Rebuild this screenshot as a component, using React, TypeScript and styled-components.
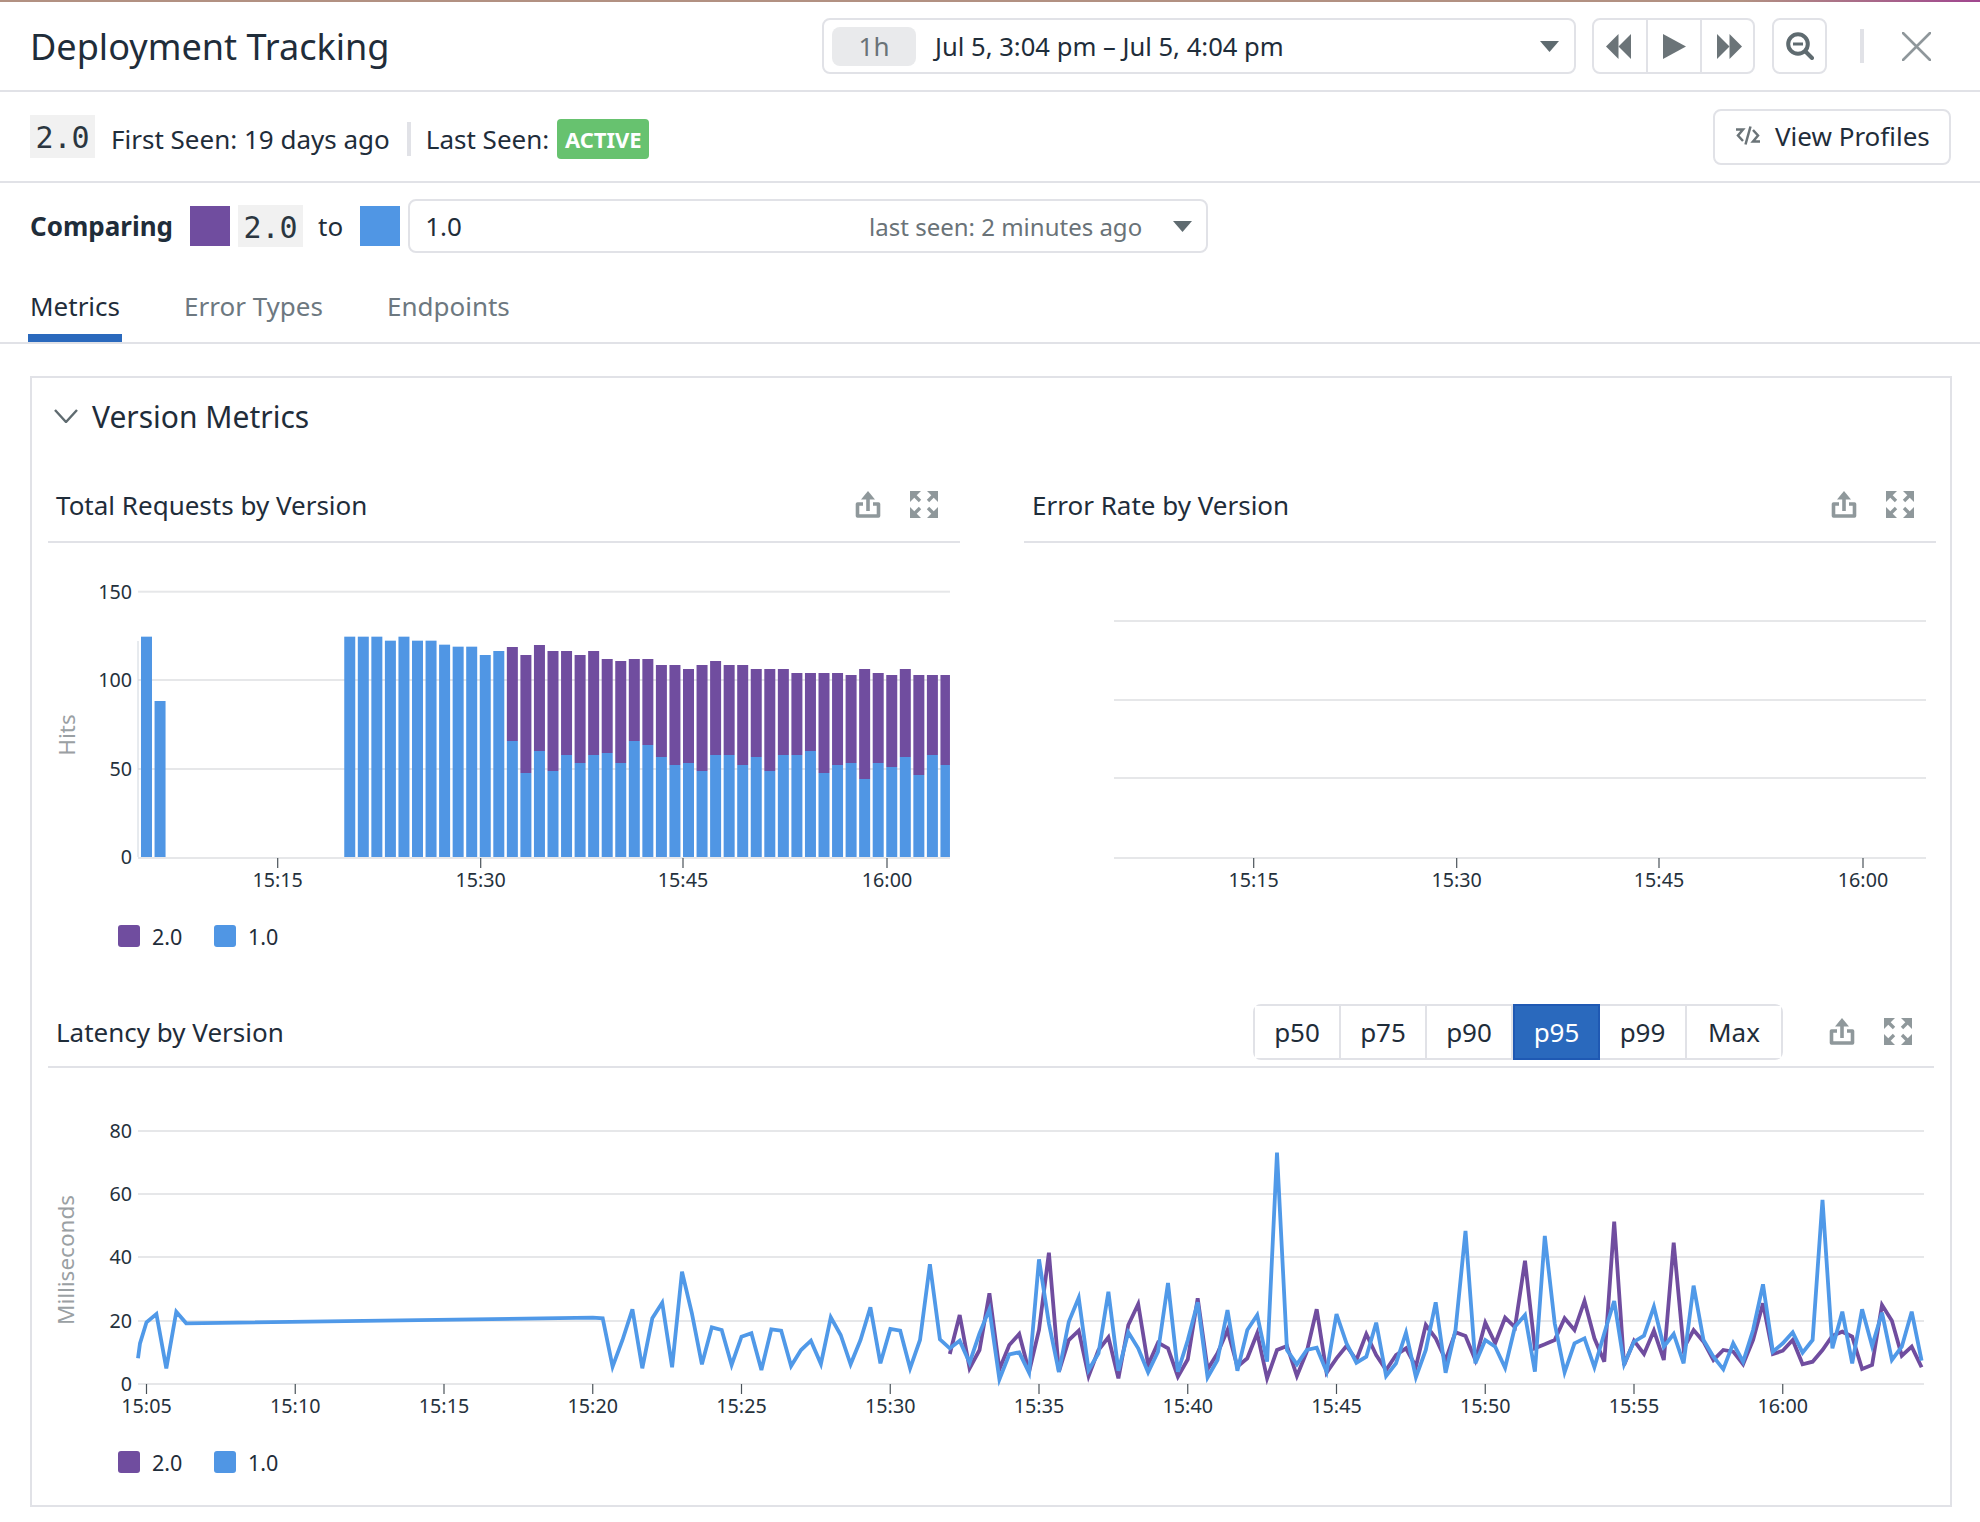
import React from 'react';
import styled, { createGlobalStyle } from 'styled-components';

const BLUE = '#5096e4';
const PURPLE = '#704d9f';
const LINE = '#e1e2e7';
const GRID = '#e6e7e9';

const GlobalStyle = createGlobalStyle`
  html, body {
    margin: 0;
    background: #fff;
    color: #1f2d3a;
    font-family: "Noto Sans", sans-serif;
  }
  * { box-sizing: border-box; }
`;

const Page = styled.div`
  width: 1980px;
  height: 1522px;
  overflow: hidden;
`;
const TopStripe = styled.div`
  height: 2px;
  background: linear-gradient(90deg, #b29182 0, #b29182 88%, #a0468f 100%);
`;
const Header = styled.header`
  height: 90px;
  padding: 0 49px 0 30px;
  display: flex;
  align-items: center;
  justify-content: space-between;
  border-bottom: 2px solid ${LINE};
`;
const Title = styled.h1`
  margin: 0;
  font-size: 36.1px;
  font-weight: 400;
  color: #1f2d3a;
`;
const Controls = styled.div`
  display: flex;
  align-items: center;
`;
const TimePicker = styled.div`
  width: 754px;
  height: 56px;
  padding: 0 15px 0 8px;
  display: flex;
  align-items: center;
  border: 2px solid ${LINE};
  border-radius: 8px;
`;
const RangeChip = styled.span`
  width: 84px;
  height: 39px;
  display: flex;
  align-items: center;
  justify-content: center;
  border-radius: 8px;
  background: #e9eaec;
  color: #6a7378;
  font-size: 26px;
`;
const RangeText = styled.span`
  flex: 1;
  margin-left: 19px;
  font-size: 25.6px;
`;
const NavGroup = styled.div`
  width: 163px;
  height: 56px;
  margin-left: 16px;
  display: grid;
  grid-template-columns: 54px 54px 1fr;
  border: 2px solid ${LINE};
  border-radius: 8px;
`;
const NavCell = styled.span<{ $last?: boolean; $first?: boolean }>`
  display: flex;
  align-items: center;
  justify-content: center;
  padding-right: ${p => (p.$first ? 3 : 0)}px;
  padding-left: ${p => (p.$last ? 3 : 0)}px;
  border-right: ${p => (p.$last ? 'none' : `2px solid ${LINE}`)};
`;
const ZoomButton = styled.span`
  width: 55px;
  height: 56px;
  margin-left: 17px;
  display: flex;
  align-items: center;
  justify-content: center;
  border: 2px solid ${LINE};
  border-radius: 8px;
`;
const ToolbarRule = styled.span`
  width: 4px;
  height: 34px;
  margin-left: 33px;
  background: ${LINE};
`;
const CloseIcon = styled.svg`
  width: 29px;
  height: 29px;
  margin-left: 38px;
`;
const InfoRow = styled.section`
  height: 91px;
  padding: 0 29px 0 30px;
  display: flex;
  align-items: center;
  border-bottom: 2px solid ${LINE};
`;
const VersionCode = styled.code`
  width: 65px;
  height: 43px;
  padding-top: 2px;
  display: flex;
  align-items: center;
  justify-content: center;
  background: #f1f1f1;
  font-family: "DejaVu Sans Mono", monospace;
  font-size: 30px;
  color: #2b3640;
`;
const InfoText = styled.span`
  font-size: 26px;
  margin: 4px 0 0 16px;
`;
const Pipe = styled.span`
  width: 4px;
  height: 34px;
  margin: 5px -1px 0 17px;
  background: ${LINE};
`;
const ActiveBadge = styled.span`
  height: 40px;
  width: 92px;
  margin: 5px 0 0 8px;
  display: flex;
  align-items: center;
  justify-content: center;
  border-radius: 4px;
  background: #67c26f;
  color: #fff;
  font-size: 22px;
  font-weight: 700;
`;
const ViewProfiles = styled.button`
  height: 56px;
  width: 238px;
  margin-left: auto;
  padding: 0 0 2px 20px;
  display: flex;
  align-items: center;
  gap: 14px;
  background: #fff;
  border: 2px solid ${LINE};
  border-radius: 8px;
  font: inherit;
  font-size: 26px;
  color: #1f2d3a;
`;
const CompareRow = styled.section`
  height: 89px;
  padding: 16px 30px 0;
  display: flex;
  align-items: flex-start;
`;
const CompareLabel = styled.strong`
  height: 54px;
  display: flex;
  align-items: center;
  font-size: 26px;
  font-weight: 700;
`;
const Swatch = styled.span<{ $color: string; $left: number }>`
  width: 40px;
  height: 40px;
  margin: 7px 0 0 ${p => p.$left}px;
  background: ${p => p.$color};
`;
const CompareCode = styled(VersionCode)`
  height: 42px;
  margin: 6px 0 0 8px;
`;
const ToWord = styled.span`
  height: 54px;
  margin-left: 15px;
  display: flex;
  align-items: center;
  font-size: 26px;
`;
const VersionSelect = styled.div`
  width: 800px;
  height: 54px;
  margin-left: 8px;
  padding: 0 14px 0 15px;
  display: flex;
  align-items: center;
  border: 2px solid ${LINE};
  border-radius: 8px;
  font-size: 26px;
`;
const SelectValue = styled.span`
  flex: 1;
`;
const SelectHint = styled.span`
  margin-right: 31px;
  font-size: 24px;
  color: #6a7378;
`;
const Tabs = styled.nav`
  height: 72px;
  padding-left: 28px;
  display: flex;
  gap: 60px;
  border-bottom: 2px solid ${LINE};
`;
const Tab = styled.span<{ $active?: boolean }>`
  height: 70px;
  padding: 6px 2px 0;
  display: flex;
  align-items: center;
  font-size: 26px;
  color: ${p => (p.$active ? '#1f2d3a' : '#6d7880')};
  border-bottom: 8px solid ${p => (p.$active ? '#2a69bd' : 'transparent')};
`;
const Card = styled.section`
  width: 1922px;
  height: 1131px;
  margin: 32px 0 0 30px;
  padding: 0 13px 0 16px;
  border: 2px solid ${LINE};
`;
const CardHeader = styled.div`
  height: 76px;
  margin-bottom: 14px;
  padding-left: 6px;
  display: flex;
  align-items: center;
  gap: 14px;
  font-size: 30px;
`;
const WidgetRow = styled.div`
  display: grid;
  grid-template-columns: 912px 912px;
  gap: 64px;
  margin-bottom: 35px;
`;
const Widget = styled.div``;
const LatencyWidget = styled.div`
  width: 1886px;
`;
const WidgetHeader = styled.div<{ $height: number }>`
  height: ${p => p.$height}px;
  padding: 0 22px 0 8px;
  display: flex;
  align-items: center;
  border-bottom: 2px solid ${LINE};
`;
const WidgetTitle = styled.span`
  flex: 1;
  font-size: 26px;
`;
const WidgetIcons = styled.span`
  display: flex;
  align-items: center;
  gap: 29px;
`;
const PercentileGroup = styled.div`
  height: 56px;
  margin-right: 46px;
  display: flex;
  border: 2px solid ${LINE};
  border-radius: 8px;
`;
const Percentile = styled.span<{ $active?: boolean; $width: number }>`
  width: ${p => p.$width}px;
  display: flex;
  align-items: center;
  justify-content: center;
  font-size: 26px;
  margin: ${p => (p.$active ? '-2px 0' : '0')};
  color: ${p => (p.$active ? '#fff' : '#1f2d3a')};
  background: ${p => (p.$active ? '#2a69bd' : '#fff')};
  border: ${p => (p.$active ? '2px solid #1f59b3' : 'none')};
  &:not(:last-child) {
    border-right: ${p => (p.$active ? '' : `2px solid ${LINE}`)};
  }
`;
const ChartSvg = styled.svg`
  display: block;
`;
const AxisText = styled.text`
  font-family: "Noto Sans", sans-serif;
  font-size: 19.7px;
  fill: #25313c;
`;
const AxisTitle = styled.text`
  font-family: "Noto Sans", sans-serif;
  font-size: 22.5px;
  fill: #9aa0a3;
`;
const Legend = styled.div`
  height: 52px;
  padding-left: 70px;
  display: flex;
  align-items: center;
`;
const LegendItem = styled.span`
  width: 96px;
  display: flex;
  align-items: center;
  gap: 12px;
  font-size: 21.5px;
`;
const LegendDot = styled.span<{ $color: string }>`
  width: 22px;
  height: 22px;
  border-radius: 3px;
  background: ${p => p.$color};
`;

const Caret = ({ width = 19 }: { width?: number }) => (
  <svg width={width} height="11" viewBox="0 0 19 11">
    <polygon points="0,0 19,0 9.5,11" fill="#5f6b70" />
  </svg>
);

const ShareIcon = () => (
  <svg width="26" height="27" viewBox="0 0 26 27" fill="none" stroke="#8f989b" strokeWidth="3.6">
    <path d="M8 13H2.5V25H23.5V13H18" strokeLinejoin="round" />
    <path d="M13 6V20" />
    <polygon points="13,0 20,8.5 6,8.5" fill="#8f989b" stroke="none" />
  </svg>
);

const ExpandIcon = () => (
  <svg width="28" height="27" viewBox="0 0 28 27" fill="#8f989b">
    <polygon points="0,0 11,0 0,11" />
    <path d="M3 3L10 10" stroke="#8f989b" strokeWidth="3.4" />
    <polygon points="28,0 17,0 28,11" />
    <path d="M25 3L18 10" stroke="#8f989b" strokeWidth="3.4" />
    <polygon points="0,27 11,27 0,16" />
    <path d="M3 24L10 17" stroke="#8f989b" strokeWidth="3.4" />
    <polygon points="28,27 17,27 28,16" />
    <path d="M25 24L18 17" stroke="#8f989b" strokeWidth="3.4" />
  </svg>
);

const WidgetActions = () => (
  <WidgetIcons>
    <ShareIcon />
    <ExpandIcon />
  </WidgetIcons>
);

// bar tops are in thirds of a pixel, below a line 67px under the widget header
const singleBars: Record<number, number> = {
  0: 80, 1: 273, 15: 80, 16: 80, 17: 80, 18: 92, 19: 80, 20: 92, 21: 92, 22: 104, 23: 110, 24: 110, 25: 135, 26: 123,
};
const stackedBars: [number, number][] = [
  [111, 393], [135, 489], [105, 423], [123, 483], [123, 435], [135, 459], [123, 435], [147, 429], [153, 459],
  [147, 393], [147, 405], [165, 441], [165, 465], [177, 459], [165, 483], [153, 435], [165, 435], [165, 465],
  [177, 441], [177, 483], [177, 435], [189, 435], [189, 423], [189, 489], [189, 465], [195, 459], [177, 507],
  [189, 459], [195, 471], [177, 441], [195, 495], [195, 435], [195, 465],
];

const BAR_BASE = 314;
const barY = (z: number) => 67 + z / 3;
const barX = (i: number) => 93 + i * 13.55;
const barW = (i: number) => (i === 59 ? 9.5 : 11);

const hourTicks = [
  { x: 229.7, label: '15:15' },
  { x: 432.7, label: '15:30' },
  { x: 635, label: '15:45' },
  { x: 839, label: '16:00' },
];

const HourAxis = () => (
  <>
    <rect x="90" y={BAR_BASE} width="812" height="2" fill={GRID} />
    {hourTicks.map(t => (
      <g key={t.label}>
        <line x1={t.x} x2={t.x} y1={BAR_BASE + 1} y2={BAR_BASE + 11} stroke="#4a5359" strokeWidth="1.2" />
        <AxisText x={t.x} y={BAR_BASE + 30} textAnchor="middle">{t.label}</AxisText>
      </g>
    ))}
  </>
);

const RequestsChart = () => (
  <ChartSvg width="912" height="367">
    {[
      { y: 48.7, label: '150' },
      { y: 137, label: '100' },
      { y: 226, label: '50' },
    ].map(g => (
      <g key={g.label}>
        <rect x="90" y={g.y - 1} width="812" height="2" fill={GRID} />
        <AxisText x="84" y={g.y + 7} textAnchor="end">{g.label}</AxisText>
      </g>
    ))}
    <AxisText x="84" y={BAR_BASE + 6.5} textAnchor="end">0</AxisText>
    <line x1="90" x2="90" y1="98" y2={BAR_BASE} stroke="#cfd6de" strokeWidth="1" />
    <AxisTitle transform={`translate(27 192) rotate(-90)`} textAnchor="middle">Hits</AxisTitle>
    {Object.entries(singleBars).map(([k, z]) => {
      const i = Number(k);
      return <rect key={k} x={barX(i)} y={barY(z)} width={barW(i)} height={BAR_BASE - barY(z)} fill={BLUE} />;
    })}
    {stackedBars.map(([top, mid], n) => {
      const i = n + 27;
      return (
        <g key={i}>
          <rect x={barX(i)} y={barY(top)} width={barW(i)} height={barY(mid) - barY(top)} fill={PURPLE} />
          <rect x={barX(i)} y={barY(mid)} width={barW(i)} height={BAR_BASE - barY(mid)} fill={BLUE} />
        </g>
      );
    })}
    <HourAxis />
  </ChartSvg>
);

const ErrorChart = () => (
  <ChartSvg width="912" height="367">
    {[78, 157, 235].map(y => (
      <rect key={y} x="90" y={y - 1} width="812" height="2" fill={GRID} />
    ))}
    <HourAxis />
  </ChartSvg>
);

// latency samples every 20s, in thirds of a pixel below the line 62px under the header
const blueFrom52 = [
  518, 712, 425, 550, 703, 592, 600, 705, 620, 610, 720, 598, 602, 708, 660, 632, 702, 562, 615, 703, 630, 532, 700,
  597, 602, 715, 630, 403, 628, 655, 632, 698, 610, 538, 748, 673, 667, 728, 388, 580, 726, 575, 503, 720, 670, 485,
  722, 607, 655, 727, 665, 459, 725, 630, 517, 742, 690, 540, 722, 600, 555, 695, 68, 660, 703, 660, 653, 725, 552,
  640, 698, 680, 578, 738, 700, 608, 742, 660, 517, 728, 600, 303, 700, 630, 650, 713, 590, 555, 725, 318, 580, 727,
  640, 625, 712, 610, 513, 703, 635, 617, 530, 650, 612, 700, 467, 630, 680, 718, 640, 695, 600, 463, 665, 640, 607,
  668, 630, 210, 655, 545, 700, 538, 648, 548, 690, 650, 545, 692,
];
const purpleFrom81 = [
  672, 555, 715, 660, 490, 718, 645, 612, 725, 600, 368, 725, 630, 602, 738, 660, 622, 745, 585, 522, 705, 638, 655,
  740, 688, 505, 718, 670, 600, 710, 685, 610, 745, 660, 648, 738, 665, 538, 728, 685, 648, 690, 612, 675, 720, 675,
  655, 710, 585, 625, 690, 607, 618, 690, 578, 640, 563, 592, 392, 655, 643, 630, 565, 600, 513, 625, 695, 275, 705,
  632, 672, 602, 690, 338, 655, 600, 635, 690, 660, 665, 703, 630, 520, 672, 662, 630, 703, 695, 660, 617, 605, 620,
  717, 705, 525, 572, 677, 650, 712,
];

const sampleX = (i: number) => 98.5 + i * 9.917;
const sampleY = (z: number) => 62 + z / 3;
const toPoints = (start: number, values: number[]) =>
  values.map((z, n) => `${sampleX(start + n).toFixed(1)},${sampleY(z).toFixed(1)}`).join(' ');

const blueHead = `90,${sampleY(685)} 92,${sampleY(640)} ` + toPoints(0, [577, 552, 715, 545, 580]);
const blueMid = toPoints(45, [563, 565, 710, 630, 538, 715, 565]);
const bluePoints = `${blueHead} ${blueMid} ${toPoints(52, blueFrom52)}`;
const purplePoints = toPoints(81, purpleFrom81);

const minuteLabels = [
  '15:05', '15:10', '15:15', '15:20', '15:25', '15:30', '15:35', '15:40', '15:45', '15:50', '15:55', '16:00',
];
const LAT_BASE = 316;

const LatencyChart = () => (
  <ChartSvg width="1886" height="368">
    {[
      { y: 63, label: '80' },
      { y: 126, label: '60' },
      { y: 189, label: '40' },
      { y: 253, label: '20' },
    ].map(g => (
      <g key={g.label}>
        <rect x="90" y={g.y - 1} width="1786" height="2" fill={GRID} />
        <AxisText x="84" y={g.y + 7} textAnchor="end">{g.label}</AxisText>
      </g>
    ))}
    <AxisText x="84" y={LAT_BASE + 7} textAnchor="end">0</AxisText>
    <rect x="90" y={LAT_BASE - 1} width="1786" height="2" fill={GRID} />
    <AxisTitle transform={`translate(26 192) rotate(-90)`} textAnchor="middle">Milliseconds</AxisTitle>
    {minuteLabels.map((label, i) => {
      const x = 98.5 + i * 148.75;
      return (
        <g key={label}>
          <line x1={x} x2={x} y1={LAT_BASE} y2={LAT_BASE + 10} stroke="#4a5359" strokeWidth="1.2" />
          <AxisText x={x} y={LAT_BASE + 29} textAnchor="middle">{label}</AxisText>
        </g>
      );
    })}
    <polyline points={purplePoints} fill="none" stroke={PURPLE} strokeWidth="3.8" />
    <polyline points={bluePoints} fill="none" stroke="#5099e8" strokeWidth="3.8" />
  </ChartSvg>
);

const VersionLegend = () => (
  <Legend>
    <LegendItem><LegendDot $color={PURPLE} />2.0</LegendItem>
    <LegendItem><LegendDot $color={BLUE} />1.0</LegendItem>
  </Legend>
);

const percentiles = [
  { label: 'p50', width: 86 },
  { label: 'p75', width: 86 },
  { label: 'p90', width: 86 },
  { label: 'p95', width: 87 },
  { label: 'p99', width: 87 },
  { label: 'Max', width: 94 },
];

export default function App() {
  return (
    <Page>
      <GlobalStyle />
      <TopStripe />
      <Header>
        <Title>Deployment Tracking</Title>
        <Controls>
          <TimePicker>
            <RangeChip>1h</RangeChip>
            <RangeText>Jul 5, 3:04 pm – Jul 5, 4:04 pm</RangeText>
            <Caret />
          </TimePicker>
          <NavGroup>
            <NavCell $first>
              <svg width="25" height="25" viewBox="0 0 25 25" fill="#6b7478">
                <polygon points="12.5,0 12.5,25 0,12.5" />
                <polygon points="25,0 25,25 12.5,12.5" />
              </svg>
            </NavCell>
            <NavCell>
              <svg width="23" height="25" viewBox="0 0 23 25" fill="#6b7478">
                <polygon points="0,0 23,12.5 0,25" />
              </svg>
            </NavCell>
            <NavCell $last>
              <svg width="25" height="25" viewBox="0 0 25 25" fill="#6b7478">
                <polygon points="0,0 12.5,12.5 0,25" />
                <polygon points="12.5,0 25,12.5 12.5,25" />
              </svg>
            </NavCell>
          </NavGroup>
          <ZoomButton>
            <svg width="28" height="28" viewBox="0 0 28 28" fill="none" stroke="#5f6b70">
              <circle cx="12" cy="12" r="9.8" strokeWidth="4" />
              <path d="M7 12H17" strokeWidth="3" />
              <path d="M20 20L26 26" strokeWidth="4" strokeLinecap="round" />
            </svg>
          </ZoomButton>
          <ToolbarRule />
          <CloseIcon viewBox="0 0 29 29" fill="none" stroke="#8f979b" strokeWidth="2.6" strokeLinecap="round">
            <path d="M1 1L28 28M28 1L1 28" />
          </CloseIcon>
        </Controls>
      </Header>
      <InfoRow>
        <VersionCode>2.0</VersionCode>
        <InfoText>First Seen: 19 days ago</InfoText>
        <Pipe />
        <InfoText>Last Seen:</InfoText>
        <ActiveBadge>ACTIVE</ActiveBadge>
        <ViewProfiles>
          <svg width="26" height="19" viewBox="0 0 26 19" fill="none" stroke="#6b7478" strokeWidth="2.5">
            <path d="M15.5 0.5L10.5 18.5" />
            <path d="M1 3.5H8L3 9.5L8 15" />
            <path d="M25 15.5H18L23 9.5L18 4" />
          </svg>
          View Profiles
        </ViewProfiles>
      </InfoRow>
      <CompareRow>
        <CompareLabel>Comparing</CompareLabel>
        <Swatch $color={PURPLE} $left={17} />
        <CompareCode>2.0</CompareCode>
        <ToWord>to</ToWord>
        <Swatch $color={BLUE} $left={17} />
        <VersionSelect>
          <SelectValue>1.0</SelectValue>
          <SelectHint>last seen: 2 minutes ago</SelectHint>
          <Caret />
        </VersionSelect>
      </CompareRow>
      <Tabs>
        <Tab $active>Metrics</Tab>
        <Tab>Error Types</Tab>
        <Tab>Endpoints</Tab>
      </Tabs>
      <Card>
        <CardHeader>
          <svg width="24" height="14" viewBox="0 0 24 14" fill="none" stroke="#5f6b70" strokeWidth="2.4">
            <path d="M1 1L12 13L23 1" />
          </svg>
          Version Metrics
        </CardHeader>
        <WidgetRow>
          <Widget>
            <WidgetHeader $height={75}>
              <WidgetTitle>Total Requests by Version</WidgetTitle>
              <WidgetActions />
            </WidgetHeader>
            <RequestsChart />
            <VersionLegend />
          </Widget>
          <Widget>
            <WidgetHeader $height={75}>
              <WidgetTitle>Error Rate by Version</WidgetTitle>
              <WidgetActions />
            </WidgetHeader>
            <ErrorChart />
          </Widget>
        </WidgetRow>
        <LatencyWidget>
          <WidgetHeader $height={71}>
            <WidgetTitle>Latency by Version</WidgetTitle>
            <PercentileGroup>
              {percentiles.map(p => (
                <Percentile key={p.label} $active={p.label === 'p95'} $width={p.width}>{p.label}</Percentile>
              ))}
            </PercentileGroup>
            <WidgetActions />
          </WidgetHeader>
          <LatencyChart />
          <VersionLegend />
        </LatencyWidget>
      </Card>
    </Page>
  );
}
